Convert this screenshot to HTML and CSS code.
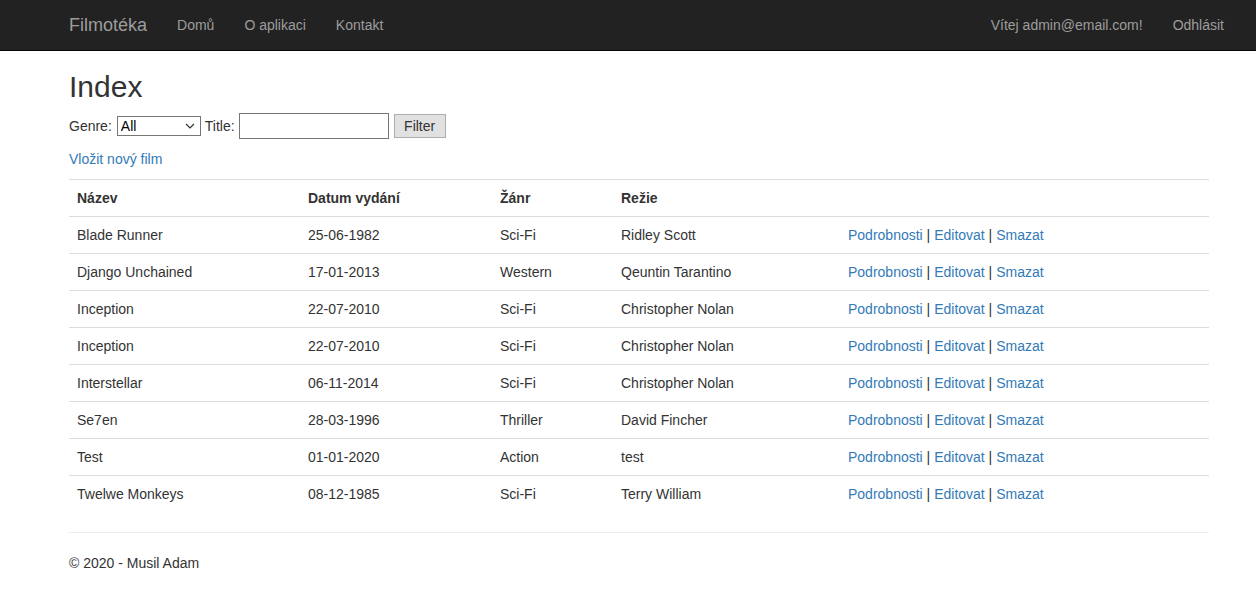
FILE: index.html
```html
<!DOCTYPE html>
<html lang="cs">
<head>
<meta charset="utf-8">
<title>Index - Filmotéka</title>
<link rel="stylesheet" href="styles.css">
</head>
<body>
<header class="navbar">
  <div class="nav-inner">
    <div class="nav-left">
      <a class="brand" href="#">Filmotéka</a>
      <a class="nav-link" href="#">Domů</a>
      <a class="nav-link" href="#">O aplikaci</a>
      <a class="nav-link" href="#">Kontakt</a>
    </div>
    <div class="nav-right">
      <a class="nav-link" href="#">Vítej admin@email.com!</a>
      <a class="nav-link" href="#">Odhlásit</a>
    </div>
  </div>
</header>
<main class="container">
  <h2 class="title">Index</h2>
  <form class="filter">
    <label class="lbl-genre">Genre:</label>
    <span class="select-wrap">
      <select class="genre"><option>All</option></select>
      <svg class="chev" width="10" height="6" viewBox="0 0 10 6"><path d="M1 1 L5 5 L9 1" fill="none" stroke="#333" stroke-width="1.2"/></svg>
    </span>
    <label>Title:</label>
    <input class="title-input" type="text">
    <button class="btn" type="button">Filter</button>
  </form>
  <p class="create"><a href="#">Vložit nový film</a></p>
  <table class="table">
    <tr>
      <th class="c1">Název</th>
      <th class="c2">Datum vydání</th>
      <th class="c3">Žánr</th>
      <th class="c4">Režie</th>
      <th></th>
    </tr>
    <tr><td>Blade Runner</td><td>25-06-1982</td><td>Sci-Fi</td><td>Ridley Scott</td><td><a href="#">Podrobnosti</a> | <a href="#">Editovat</a> | <a href="#">Smazat</a></td></tr>
    <tr><td>Django Unchained</td><td>17-01-2013</td><td>Western</td><td>Qeuntin Tarantino</td><td><a href="#">Podrobnosti</a> | <a href="#">Editovat</a> | <a href="#">Smazat</a></td></tr>
    <tr><td>Inception</td><td>22-07-2010</td><td>Sci-Fi</td><td>Christopher Nolan</td><td><a href="#">Podrobnosti</a> | <a href="#">Editovat</a> | <a href="#">Smazat</a></td></tr>
    <tr><td>Inception</td><td>22-07-2010</td><td>Sci-Fi</td><td>Christopher Nolan</td><td><a href="#">Podrobnosti</a> | <a href="#">Editovat</a> | <a href="#">Smazat</a></td></tr>
    <tr><td>Interstellar</td><td>06-11-2014</td><td>Sci-Fi</td><td>Christopher Nolan</td><td><a href="#">Podrobnosti</a> | <a href="#">Editovat</a> | <a href="#">Smazat</a></td></tr>
    <tr><td>Se7en</td><td>28-03-1996</td><td>Thriller</td><td>David Fincher</td><td><a href="#">Podrobnosti</a> | <a href="#">Editovat</a> | <a href="#">Smazat</a></td></tr>
    <tr><td>Test</td><td>01-01-2020</td><td>Action</td><td>test</td><td><a href="#">Podrobnosti</a> | <a href="#">Editovat</a> | <a href="#">Smazat</a></td></tr>
    <tr><td>Twelwe Monkeys</td><td>08-12-1985</td><td>Sci-Fi</td><td>Terry William</td><td><a href="#">Podrobnosti</a> | <a href="#">Editovat</a> | <a href="#">Smazat</a></td></tr>
  </table>
  <hr class="sep">
  <footer class="footer"><p>© 2020 - Musil Adam</p></footer>
</main>
</body>
</html>
```
FILE: styles.css
```css
* { box-sizing: border-box; }
html, body { margin: 0; padding: 0; }
body {
  font-family: "Liberation Sans", Arial, Helvetica, sans-serif;
  font-size: 14px;
  line-height: 20px;
  color: #333;
  background: #fff;
}
a { color: #337ab7; text-decoration: none; }

.navbar {
  height: 51px;
  background: #222;
  border-bottom: 1px solid #080808;
}
.nav-inner {
  display: flex;
  justify-content: space-between;
  height: 50px;
  padding-left: 54px;
  padding-right: 17px;
}
.nav-left, .nav-right { display: flex; height: 50px; }
.brand {
  font-size: 18px;
  line-height: 20px;
  padding: 15px;
  color: #9d9d9d;
}
.nav-link {
  padding: 15px;
  line-height: 20px;
  color: #9d9d9d;
}

.container {
  width: 1140px;
  margin-left: 69px;
}
.title {
  font-size: 30px;
  font-weight: 500;
  line-height: 33px;
  margin: 19px 0 10px;
}
.filter {
  display: flex;
  align-items: center;
  height: 26px;
  margin: 0 0 10px;
}
.filter label { margin-right: 4px; }
.filter .lbl-genre { margin-right: 5px; }
.select-wrap {
  position: relative;
  display: inline-block;
  width: 84px;
  height: 20px;
  margin-right: 4px;
}
.genre {
  appearance: none;
  -webkit-appearance: none;
  width: 84px;
  height: 20px;
  border: 1px solid #767676;
  border-radius: 0;
  background: #fff;
  font-family: "Liberation Sans", Arial, sans-serif;
  font-size: 14px;
  color: #000;
  padding: 0 0 0 3px;
  margin: 0;
}
.chev {
  position: absolute;
  right: 6px;
  top: 7px;
  pointer-events: none;
}
.title-input {
  width: 150px;
  height: 26px;
  border: 1px solid #767676;
  border-radius: 0;
  margin: 0 5px 0 0;
  padding: 1px 2px;
  font-family: "Liberation Sans", Arial, sans-serif;
  font-size: 14px;
}
.btn {
  height: 24px;
  width: 52px;
  background: #e1e1e1;
  border: 1px solid #adadad;
  border-radius: 0;
  font-family: "Liberation Sans", Arial, sans-serif;
  font-size: 14px;
  color: #333;
  padding: 0;
  margin: 0;
}
.create { margin: 0 0 10px; }

.table {
  width: 100%;
  border-collapse: collapse;
  border-spacing: 0;
  margin-bottom: 20px;
}
.table th, .table td {
  padding: 8px;
  line-height: 20px;
  text-align: left;
  vertical-align: top;
  border-top: 1px solid #ddd;
}
.table th { font-weight: bold; }
.c1 { width: 231px; }
.c2 { width: 192px; }
.c3 { width: 121px; }
.c4 { width: 227px; }

.sep {
  border: 0;
  border-top: 1px solid #eee;
  margin: 0 0 20px;
  height: 0;
}
.footer p { margin: 0 0 10px; }
```
